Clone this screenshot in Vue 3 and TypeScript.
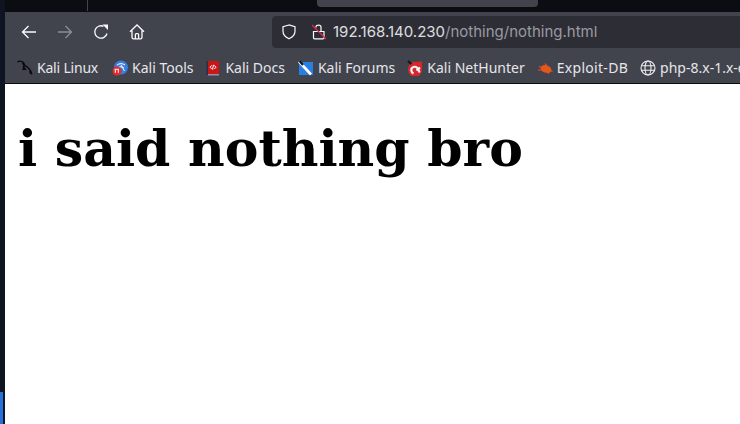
<script setup lang="ts">
const bookmarks = [
  { label: 'Kali Linux', icon: 'linux' },
  { label: 'Kali Tools', icon: 'tools' },
  { label: 'Kali Docs', icon: 'docs' },
  { label: 'Kali Forums', icon: 'forums' },
  { label: 'Kali NetHunter', icon: 'nethunter' },
  { label: 'Exploit-DB', icon: 'exploit' },
  { label: 'php-8.x-1.x-dev', icon: 'globe' },
]
</script>

<template>
  <div class="screen">
    <aside class="rail">
      <span class="rail-fill"></span>
      <span class="rail-blue"></span>
    </aside>
    <main class="browser">
      <div class="tabs">
        <span class="divider"></span>
        <span class="tab"></span>
      </div>
      <div class="toolbar">
        <div class="nav">
          <svg class="nav-icon" viewBox="0 0 16 16"><path d="M15 8H1.500M7.500 2 1.500 8l6 6" /></svg>
          <svg class="nav-icon off" viewBox="0 0 16 16"><path d="M1 8h13.500M8.500 2l6 6-6 6" /></svg>
          <svg class="nav-icon" viewBox="0 0 16 16"><path d="M14 9.500A6.200 6.200 0 1 1 10.500 2.300" /><path class="solid" d="M9.500 0.500h5.500v5.500z" /></svg>
          <svg class="nav-icon" viewBox="0 0 16 16"><path d="M1 7.800 8 1l7 6.800M3 6.500v6.700c0 1 .6 1.600 1.600 1.600h6.800c1 0 1.600-.6 1.600-1.600V6.500M6.400 14.800v-4.200c0-.6.4-1 1-1h1.200c.6 0 1 .4 1 1v4.200" /></svg>
        </div>
        <div class="urlbar">
          <svg class="shield" viewBox="0 0 16 16"><path d="M8 1 2 2.800v4.400c0 3.600 2.600 6 6 7.600 3.400-1.600 6-4 6-7.600V2.800z" /></svg>
          <svg class="lock" viewBox="0 0 16 16">
            <path class="lock-body" d="M5 3.600V3c0-2.600 5-2.600 5 0v4M2.500 7.500h10.500v6.200c0 .7-.4 1.100-1.100 1.100H3.600c-.7 0-1.100-.4-1.100-1.100z" />
            <path class="lock-slash" d="M1 1l14 14" />
          </svg>
          <span class="url"><span class="host">192.168.140.230</span><span class="path">/nothing/nothing.html</span></span>
        </div>
      </div>
      <nav class="bookmarks">
        <a v-for="b in bookmarks" :key="b.label" class="bookmark">
          <svg class="bm-icon" viewBox="0 0 16 16">
            <template v-if="b.icon === 'linux'">
              <path class="dragon" d="M0.500 1.800C3 .6 5.800 1.300 7 3.200c.8 1.400-.8 2.600-.6 4 .2 1.200 1.500 2 2.800 2.400M5 3.400c2 .6 4.200 3 5.800 4.200 1.700 1.300 3.400 2.700 4 6.900M8 6.500c-1.400.8-2.200 2-2 3.700M12.600 10.800c.6 1 .8 2 .6 3" />
            </template>
            <template v-else-if="b.icon === 'tools'">
              <circle cx="9" cy="7.500" r="7" fill="#367ee0" />
              <path class="wave" d="M5 5c2.500-1.800 5.500-1.800 8 0M6 7.500c2-1 4-1 6 .5M9 5l3.500 6" />
              <circle cx="5" cy="11" r="4.500" fill="#e62a2a" />
              <path class="wave" d="M3.300 9.300v3.500M6.300 9.300v3.500M2.700 9.300h4.200" />
            </template>
            <template v-else-if="b.icon === 'docs'">
              <rect x="2" y="1" width="12" height="13" fill="#cc1616" />
              <rect x="2" y="14" width="12" height="1.500" fill="#8c95a8" />
              <rect x="1.500" y="1" width="1.500" height="14.500" fill="#2b2f49" />
              <path class="wave" d="M6.800 5.300 5 7.200l1.800 1.900M9.200 5.300l1.800 1.900-1.800 1.900M8.500 4.800 7.500 9.600" />
            </template>
            <template v-else-if="b.icon === 'forums'">
              <rect x="1" y="2" width="14" height="13" fill="#2a7de1" />
              <path class="slash-w" d="M1 1.500 13 14.500" />
              <path class="slash-k" d="M1.500 1 5 5" />
            </template>
            <template v-else-if="b.icon === 'nethunter'">
              <path d="M5 2 15 1.500v7.500a7 7 0 0 1-14 1.500C1 6.500 2.500 4 5 2z" fill="#d8262e" />
              <path class="hook" d="M12.500 12.500C12 8.500 9 6 6.500 7 3.500 8 3.500 12 6.500 13.500M13 7.500 9.500 10.500" />
              <path class="slash-k" d="M1 1 4.500 4" />
            </template>
            <template v-else-if="b.icon === 'exploit'">
              <ellipse cx="9" cy="9" rx="5.500" ry="3.800" fill="#e4571b" transform="rotate(20 9 9)" />
              <path class="bug" d="M2 6.500 5 8M1 10h4M8 3.500l2 2.500M12 13.500 10 11.500M15.500 11.500l-2-1" />
            </template>
            <template v-else>
              <g class="globe">
                <circle cx="8" cy="8" r="7" />
                <ellipse cx="8" cy="8" rx="3" ry="7" />
                <path d="M1.300 5.800h13.400M1.300 10.200h13.400" />
              </g>
            </template>
          </svg>
          <span class="bm-label">{{ b.label }}</span>
        </a>
      </nav>
      <article class="page">
        <h1>i said nothing bro</h1>
      </article>
    </main>
  </div>
</template>

<style scoped>
.screen {
  display: flex;
  width: 740px;
  height: 424px;
  overflow: hidden;
  background: #fff;
}
.rail {
  display: flex;
  flex-direction: column;
  flex: 0 0 5px;
  background: #0f1422;
}
.rail-fill { flex: 1; }
.rail-blue {
  display: block;
  width: 3px;
  height: 32px;
  background: #2671d9;
}
.browser {
  display: flex;
  flex: 1;
  flex-direction: column;
  min-width: 0;
}
.tabs {
  display: flex;
  flex: 0 0 12px;
  align-items: flex-start;
  background: #0c0d12;
}
.divider {
  width: 1px;
  height: 11px;
  margin-left: 82px;
  background: #43454c;
}
.tab {
  width: 221px;
  height: 7px;
  margin-left: 229px;
  background: #42444d;
  border-radius: 0 0 4px 4px;
}
.toolbar {
  display: flex;
  flex: 0 0 36px;
  align-items: center;
  padding-top: 4px;
  box-sizing: border-box;
  background: #42444d;
}
.nav {
  display: flex;
  gap: 20px;
  align-items: center;
  width: 267px;
  padding-left: 16px;
  box-sizing: border-box;
}
.nav-icon {
  width: 16px;
  height: 16px;
  fill: none;
  stroke: #fbfbfe;
  stroke-width: 1.300;
}
.nav-icon .solid {
  fill: #fbfbfe;
  stroke: none;
}
.nav-icon.off { opacity: 0.4; }
.urlbar {
  display: flex;
  flex: 1;
  align-items: center;
  height: 32px;
  padding-left: 9px;
  background: #2d2e35;
  border-radius: 4px 0 0 4px;
}
.shield,
.lock {
  width: 16px;
  height: 16px;
  flex: none;
  fill: none;
  stroke: #fbfbfe;
  stroke-width: 1.200;
}
.lock { margin-left: 14px; }
.lock-slash { stroke: #e2264e; }
.url {
  margin-left: 6px;
  font: 15px/20px "Inter", "Noto Sans", sans-serif;
  white-space: nowrap;
}
.host { color: #fbfbfe; opacity: 0.85; }
.path { color: #9a9aa2; }
.bookmarks {
  display: flex;
  flex: 0 0 36px;
  align-items: center;
  gap: 12px;
  padding: 4px 0 0 12px;
  overflow: hidden;
  background: #42444d;
  border-bottom: 1px solid #0c0c0d;
  box-sizing: border-box;
}
.bookmark {
  display: flex;
  flex: none;
  align-items: center;
  gap: 4px;
}
.bookmark:first-child .bm-label {
  width: 62px;
  letter-spacing: -0.2px;
}
.bookmark:first-child { margin-right: 1px; }
.bookmark:nth-child(6) .bm-label { letter-spacing: 0.3px; }
.bookmark:nth-child(4) { margin-left: 1px; }
.bm-icon {
  width: 16px;
  height: 16px;
  flex: none;
}
.bm-label {
  color: #e6e6ea;
  font: 14px/18px "Noto Sans", sans-serif;
  white-space: nowrap;
}
.dragon { fill: none; stroke: #0a0a0c; stroke-width: 1.300; }
.wave { fill: none; stroke: #fff; stroke-width: 1; }
.slash-w { fill: none; stroke: #fff; stroke-width: 2.600; }
.slash-k { fill: none; stroke: #15161b; stroke-width: 2.200; }
.hook { fill: none; stroke: #f3f3f3; stroke-width: 2.200; }
.bug { fill: none; stroke: #e4571b; stroke-width: 1.200; }
.globe { fill: none; stroke: #f0f0f3; stroke-width: 1.100; }
.page {
  flex: 1;
  padding: 0 13px;
  background: #fff;
}
h1 {
  margin: 32px 0 0;
  color: #000;
  font: 700 50.500px/66px "DejaVu Serif", serif;
  white-space: nowrap;
}
</style>
